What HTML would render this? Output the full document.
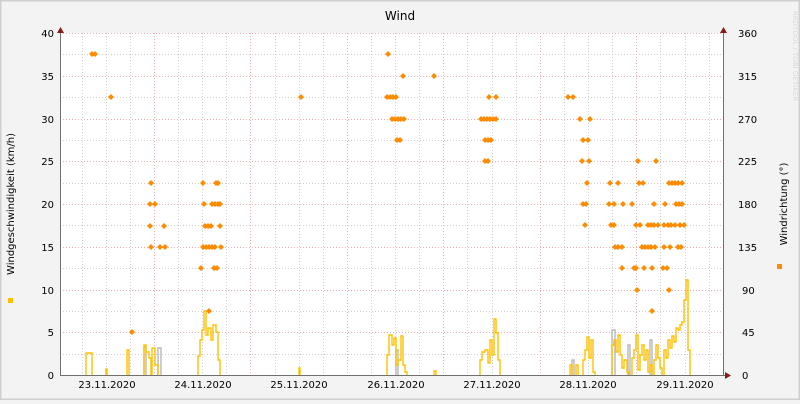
<!DOCTYPE html>
<html><head><meta charset="utf-8"><style>
html,body{margin:0;padding:0}
body{width:800px;height:400px;overflow:hidden;background:#f3f3f3;font-family:"DejaVu Sans","Liberation Sans",sans-serif}
</style></head><body>
<svg width="800" height="400" xmlns="http://www.w3.org/2000/svg" font-family="DejaVu Sans, Liberation Sans, sans-serif">
<rect x="0" y="0" width="800" height="400" fill="#f3f3f3"/>
<rect x="0.5" y="0.5" width="799" height="399" fill="none" stroke="#cfcfcf" stroke-width="2"/>
<rect x="60" y="33" width="664" height="342" fill="#fff"/>
<g stroke="#cfcfcf" stroke-width="1" stroke-dasharray="1,2">
<path d="M60 54.5H724M60 97.5H724M60 140.5H724M60 183.5H724M60 225.5H724M60 268.5H724M60 311.5H724M60 354.5H724"/>
<path d="M82.5 33V375M106.5 33V375M130.5 33V375M178.5 33V375M202.5 33V375M226.5 33V375M275.5 33V375M299.5 33V375M323.5 33V375M371.5 33V375M395.5 33V375M419.5 33V375M467.5 33V375M492.5 33V375M516.5 33V375M564.5 33V375M588.5 33V375M612.5 33V375M660.5 33V375M685.5 33V375M709.5 33V375"/>
</g>
<g stroke="#e8b0b0" stroke-width="1" stroke-dasharray="1,2">
<path d="M60 33.5H724M60 76.5H724M60 119.5H724M60 161.5H724M60 204.5H724M60 247.5H724M60 290.5H724M60 332.5H724"/>
<path d="M154.5 33V375M250.5 33V375M347.5 33V375M443.5 33V375M540.5 33V375M636.5 33V375"/>
</g>
<g fill="none" stroke-width="1.4">
<path stroke="#b8b8b8" d="M144 375V347H146V375M158 375V348H161V375M396 375V350H398V375M572 375V360H574V375M612 375V330H615V375M628 375V345H630V375M650 375V340H652V375"/>
<path stroke="#ffc000" d="
M86 375V353H92V375M106 375V369H107V375M127 375V350H129V375
M144 375V345H146V352H149V358H151V375M152 375V348H155V365H158V375
M198 375V356H200V340H202V330H204V311H206V335H208V328H211V340H213V325H216V332H218V360H220V375
M299 375V368H300V375
M387 375V355H389V335H392V345H394V338H396V365H398V360H401V336H403V365H405V372H407V375
M434 375V371H436V375
M480 375V360H482V352H485V350H488V363H490V340H492V355H494V319H496V333H498V360H500V375
M570 375V365H572V375M576 375V365H578V375
M583 375V360H585V350H587V337H589V358H591V340H593V372H595V375
M612 375V345H614V340H616V352H618V335H620V355H622V368H624V360H627V372H629V375
M632 375V358H634V350H636V335H638V370H640V355H642V345H644V360H646V350H648V372H650V365H652V375
M654 375V360H656V345H658V358H660V368H662V375
M664 375V350H666V358H668V340H670V348H672V336H674V342H676V328H678V330H680V325H682V322H684V300H686V280H688V350H690V375"/>
</g>
<g fill="#ff8c00">
<path d="
M92 51l3 3-3 3-3-3zM95 51l3 3-3 3-3-3zM111 94l3 3-3 3-3-3zM132 329l3 3-3 3-3-3z
M151 180l3 3-3 3-3-3zM150 201l3 3-3 3-3-3zM155 201l3 3-3 3-3-3zM150 223l3 3-3 3-3-3zM164 223l3 3-3 3-3-3zM151 244l3 3-3 3-3-3zM160 244l3 3-3 3-3-3zM165 244l3 3-3 3-3-3z
M203 180l3 3-3 3-3-3zM216 180l3 3-3 3-3-3zM218 180l3 3-3 3-3-3zM204 201l3 3-3 3-3-3zM212 201l3 3-3 3-3-3zM215 201l3 3-3 3-3-3zM218 201l3 3-3 3-3-3zM220 201l3 3-3 3-3-3z
M205 223l3 3-3 3-3-3zM208 223l3 3-3 3-3-3zM211 223l3 3-3 3-3-3zM220 223l3 3-3 3-3-3zM203 244l3 3-3 3-3-3zM206 244l3 3-3 3-3-3zM209 244l3 3-3 3-3-3zM212 244l3 3-3 3-3-3zM215 244l3 3-3 3-3-3zM221 244l3 3-3 3-3-3z
M201 265l3 3-3 3-3-3zM214 265l3 3-3 3-3-3zM217 265l3 3-3 3-3-3zM209 308l3 3-3 3-3-3zM301 94l3 3-3 3-3-3z
M388 51l3 3-3 3-3-3zM403 73l3 3-3 3-3-3zM434 73l3 3-3 3-3-3zM387 94l3 3-3 3-3-3zM390 94l3 3-3 3-3-3zM393 94l3 3-3 3-3-3zM396 94l3 3-3 3-3-3z
M392 116l3 3-3 3-3-3zM395 116l3 3-3 3-3-3zM398 116l3 3-3 3-3-3zM401 116l3 3-3 3-3-3zM404 116l3 3-3 3-3-3zM397 137l3 3-3 3-3-3zM400 137l3 3-3 3-3-3z
M489 94l3 3-3 3-3-3zM496 94l3 3-3 3-3-3zM481 116l3 3-3 3-3-3zM484 116l3 3-3 3-3-3zM487 116l3 3-3 3-3-3zM490 116l3 3-3 3-3-3zM493 116l3 3-3 3-3-3zM496 116l3 3-3 3-3-3z
M485 137l3 3-3 3-3-3zM488 137l3 3-3 3-3-3zM491 137l3 3-3 3-3-3zM485 158l3 3-3 3-3-3zM488 158l3 3-3 3-3-3z
M568 94l3 3-3 3-3-3zM573 94l3 3-3 3-3-3zM580 116l3 3-3 3-3-3zM590 116l3 3-3 3-3-3zM583 137l3 3-3 3-3-3zM588 137l3 3-3 3-3-3zM582 158l3 3-3 3-3-3zM589 158l3 3-3 3-3-3zM638 158l3 3-3 3-3-3zM656 158l3 3-3 3-3-3z
M587 180l3 3-3 3-3-3zM610 180l3 3-3 3-3-3zM618 180l3 3-3 3-3-3zM639 180l3 3-3 3-3-3zM643 180l3 3-3 3-3-3zM669 180l3 3-3 3-3-3zM672 180l3 3-3 3-3-3zM675 180l3 3-3 3-3-3zM678 180l3 3-3 3-3-3zM682 180l3 3-3 3-3-3z
M583 201l3 3-3 3-3-3zM586 201l3 3-3 3-3-3zM609 201l3 3-3 3-3-3zM614 201l3 3-3 3-3-3zM623 201l3 3-3 3-3-3zM632 201l3 3-3 3-3-3zM654 201l3 3-3 3-3-3zM665 201l3 3-3 3-3-3zM676 201l3 3-3 3-3-3zM679 201l3 3-3 3-3-3zM682 201l3 3-3 3-3-3z
M585 222l3 3-3 3-3-3zM611 222l3 3-3 3-3-3zM614 222l3 3-3 3-3-3zM636 222l3 3-3 3-3-3zM640 222l3 3-3 3-3-3zM648 222l3 3-3 3-3-3zM651 222l3 3-3 3-3-3zM654 222l3 3-3 3-3-3zM658 222l3 3-3 3-3-3zM664 222l3 3-3 3-3-3zM668 222l3 3-3 3-3-3zM671 222l3 3-3 3-3-3zM675 222l3 3-3 3-3-3zM680 222l3 3-3 3-3-3zM684 222l3 3-3 3-3-3z
M615 244l3 3-3 3-3-3zM618 244l3 3-3 3-3-3zM622 244l3 3-3 3-3-3zM642 244l3 3-3 3-3-3zM645 244l3 3-3 3-3-3zM648 244l3 3-3 3-3-3zM651 244l3 3-3 3-3-3zM655 244l3 3-3 3-3-3zM664 244l3 3-3 3-3-3zM670 244l3 3-3 3-3-3zM678 244l3 3-3 3-3-3zM681 244l3 3-3 3-3-3z
M622 265l3 3-3 3-3-3zM634 265l3 3-3 3-3-3zM636 265l3 3-3 3-3-3zM644 265l3 3-3 3-3-3zM652 265l3 3-3 3-3-3zM663 265l3 3-3 3-3-3zM667 265l3 3-3 3-3-3z
M637 287l3 3-3 3-3-3zM669 287l3 3-3 3-3-3zM652 308l3 3-3 3-3-3z"/>
</g>
<path d="M60.5 28V376M723.5 28V376M60 375.5H730" stroke="#707070" stroke-width="1" fill="none"/>
<path d="M57 33L60.5 27 64 33Z M720 33L723.5 27 727 33Z M725 372L731 375.5 725 379Z" fill="#8b1a1a"/>
<g font-size="10" fill="#000">
<g text-anchor="end">
<text x="54" y="37">40</text><text x="54" y="80">35</text><text x="54" y="123">30</text><text x="54" y="165">25</text><text x="54" y="208">20</text><text x="54" y="251">15</text><text x="54" y="294">10</text><text x="54" y="336">5</text><text x="54" y="379">0</text>
</g>
<text x="738" y="37">360</text><text x="738" y="80">315</text><text x="738" y="123">270</text><text x="738" y="165">225</text><text x="738" y="208">180</text><text x="738" y="251">135</text><text x="742" y="294">90</text><text x="742" y="336">45</text><text x="742" y="379">0</text>
<g text-anchor="middle">
<text x="107" y="388">23.11.2020</text><text x="203" y="388">24.11.2020</text><text x="299" y="388">25.11.2020</text><text x="396" y="388">26.11.2020</text><text x="492" y="388">27.11.2020</text><text x="588" y="388">28.11.2020</text><text x="685" y="388">29.11.2020</text>
</g>
<text x="400" y="20" font-size="12" text-anchor="middle">Wind</text>
<text transform="translate(14,204) rotate(-90)" text-anchor="middle">Windgeschwindigkeit (km/h)</text>
<text transform="translate(787,204) rotate(-90)" text-anchor="middle">Windrichtung (°)</text>
<text transform="translate(793,56) rotate(90)" text-anchor="middle" font-size="7" fill="#d8d8d8">RRDTOOL / TOBI OETIKER</text>
</g>
<rect x="8" y="298" width="5" height="5" fill="#ffc000"/>
<rect x="777" y="264" width="5" height="5" fill="#ff8c00"/>
</svg>
</body></html>
